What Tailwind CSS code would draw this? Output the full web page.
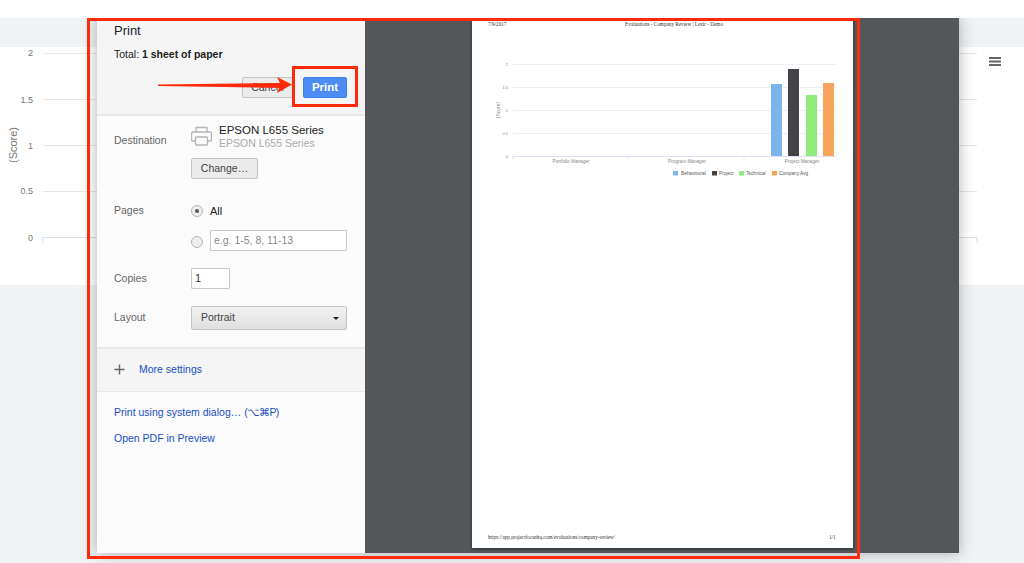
<!DOCTYPE html>
<html lang="en">
<head>
<meta charset="utf-8">
<title>Print</title>
<script src="https://cdn.jsdelivr.net/npm/@tailwindcss/browser@4"></script>
</head>
<body class="overflow-hidden">
<div class="relative w-[1024px] h-[563px] overflow-hidden bg-[#f0f3f6] font-['Liberation_Sans',Arial,sans-serif]">
  <div class="h-[18px] bg-white relative z-20"></div>
  <div class="mt-[29px] h-[238px] bg-white">
    <svg width="1024" height="238" viewBox="0 0 1024 238" font-family="Liberation Sans, Arial, sans-serif" fill="#777" font-size="9">
      <g stroke="#e6e6e6"><path d="M43 6.500H977M43 52.500H977M43 98.500H977M43 144.500H977"/></g>
      <path d="M43 196V190.500H977V196" fill="none" stroke="#d5dfe9"/>
      <text x="33" y="9" text-anchor="end">2</text>
      <text x="33" y="56" text-anchor="end">1.5</text>
      <text x="33" y="102" text-anchor="end">1</text>
      <text x="33" y="147" text-anchor="end">0.5</text>
      <text x="33" y="194" text-anchor="end">0</text>
      <text transform="translate(17 98) rotate(-90)" text-anchor="middle" font-size="11">(Score)</text>
      <path d="M989 11H1001M989 14.500H1001M989 18H1001" stroke="#666" stroke-width="2"/>
    </svg>
  </div>

  <div class="absolute left-[97px] top-[18px] z-10 flex h-[535px] w-[862px] shadow-[0_0_14px_rgba(0,0,0,0.3)]">
    <aside class="flex h-full w-[268px] flex-col bg-[#fbfbfb] text-[#333]">
      <header class="h-[98px] border-b-2 border-[#e8e8e8] bg-[#f5f5f5] pl-[17px] pr-[18px] pt-[5px]">
        <h1 class="text-[13px] leading-[15px] text-[#222]">Print</h1>
        <p class="mt-[10px] text-[10.500px] leading-[13px] text-[#222]">Total: <b>1 sheet of paper</b></p>
        <div class="mt-[16px] flex justify-end gap-[10px]">
          <button class="h-[21px] w-[51px] rounded-[2px] border border-[#c4c4c4] bg-[#ececec] text-[10.500px] text-[#444]">Cancel</button>
          <button class="h-[21px] w-[44px] rounded-[2px] border border-[#3f7fe8] bg-[#4d8cf5] text-[11.500px] font-bold text-white">Print</button>
        </div>
      </header>

      <section class="h-[231px] px-[17px] pt-[7px] text-[10.500px]">
        <div class="flex">
          <span class="mt-[10px] w-[77px] text-[#666]">Destination</span>
          <div>
            <div class="flex items-start gap-[7px]">
              <svg width="21" height="22" viewBox="0 0 21 22" class="mt-[3px]" fill="none" stroke="#b5b5b5" stroke-width="1.300">
                <path d="M5 6V1.500H16V6M4.500 15H1.500a1 1 0 0 1-1-1V7.500a1.500 1.500 0 0 1 1.500-1.500H19a1.500 1.500 0 0 1 1.500 1.500V14a1 1 0 0 1-1 1H16.500"/>
                <rect x="4.500" y="11" width="12" height="8" rx="1"/>
              </svg>
              <div>
                <div class="text-[11.500px] leading-[14px] text-[#222]">EPSON L655 Series</div>
                <div class="text-[10.500px] leading-[13px] text-[#aaa]">EPSON L655 Series</div>
              </div>
            </div>
            <button class="mt-[8px] h-[21px] w-[67px] rounded-[2px] border border-[#c4c4c4] bg-[#ececec] text-[10.500px] text-[#444]">Change…</button>
          </div>
        </div>

        <div class="mt-[25px] flex">
          <span class="-mt-[1px] w-[77px] text-[#666]">Pages</span>
          <div>
            <label class="flex h-[14px] items-center gap-[7px] text-[11px] text-[#222]">
              <span class="flex h-[12px] w-[12px] items-center justify-center rounded-full border border-[#b5b5b5] bg-[#eee]"><span class="h-[4px] w-[4px] rounded-full bg-[#555]"></span></span>
              All
            </label>
            <div class="mt-[12px] flex items-center gap-[7px]">
              <span class="mt-[2px] h-[12px] w-[12px] rounded-full border border-[#b5b5b5] bg-[#eee]"></span>
              <div class="flex h-[21px] w-[137px] items-center rounded-[1px] border border-[#c8c8c8] bg-white pl-[3px] text-[#888]">e.g. 1-5, 8, 11-13</div>
            </div>
          </div>
        </div>

        <div class="mt-[17px] flex items-center">
          <span class="w-[77px] text-[#666]">Copies</span>
          <div class="flex h-[21px] w-[39px] items-center rounded-[1px] border border-[#c8c8c8] bg-white pl-[3px] text-[11px] text-[#333]">1</div>
        </div>

        <div class="mt-[17px] flex items-center">
          <span class="w-[77px] text-[#666]">Layout</span>
          <div class="flex h-[24px] w-[156px] items-center justify-between rounded-[2px] border border-[#c4c4c4] bg-gradient-to-b from-[#f2f2f2] to-[#dfdfdf] pl-[9px] pr-[7px] text-[#444]">
            Portrait
            <span class="h-0 w-0 border-x-[3px] border-t-[3px] border-x-transparent border-t-[#222]"></span>
          </div>
        </div>
      </section>

      <div class="flex h-[45px] items-center border-y border-t-2 border-y-[#e8e8e8] bg-[#f5f5f5] pb-[1px] pl-[17px] text-[10.500px] text-[#1a4fc4]">
        <svg width="11" height="11" viewBox="0 0 11 11" stroke="#666" stroke-width="1.400"><path d="M5.500 0.500V10.500M0.500 5.500H10.500"/></svg>
        <span class="ml-[14px]">More settings</span>
      </div>

      <nav class="flex flex-col gap-[13px] pl-[17px] pt-[14px] text-[10.500px] leading-[13px] text-[#1a4fc4]">
        <a>Print using system dialog… <span class="tracking-[-0.7px]">(⌥⌘P)</span></a>
        <a>Open PDF in Preview</a>
      </nav>
    </aside>

    <main class="h-full flex-1 bg-[#53575a] pl-[107px]">
      <div class="relative h-[530px] w-[381px] bg-white font-['Liberation_Serif','Times_New_Roman',serif] shadow-[0_1px_3px_rgba(0,0,0,0.5)]">
        <svg width="381" height="530" viewBox="0 0 381 530" font-family="Liberation Serif, serif">
          <g font-size="5.200" fill="#333">
            <text x="16" y="7.500">7/9/2017</text>
            <text x="153" y="7.500">Evaluations - Company Review | Lexir - Demo</text>
            <text x="16" y="521">https://app.projectfocushq.com/evaluations/company-review/</text>
            <text x="357" y="521">1/1</text>
          </g>
          <g stroke="#eceff3"><path d="M41 46.500H364M41 69.500H364M41 92.500H364M41 115.500H364"/></g>
          <path d="M41 138.500H364M41 138V141M156 138V141M272 138V141" fill="none" stroke="#d9e2ee"/>
          <g font-family="Liberation Sans, sans-serif" font-size="4" fill="#888">
            <text x="36" y="48" text-anchor="end">2</text>
            <text x="36" y="71" text-anchor="end">1.5</text>
            <text x="36" y="94" text-anchor="end">1</text>
            <text x="36" y="117" text-anchor="end">0.5</text>
            <text x="36" y="140" text-anchor="end">0</text>
            <text transform="translate(28 92) rotate(-90)" text-anchor="middle" font-size="5">(Score)</text>
            <text x="99" y="145" text-anchor="middle" font-size="4.700">Portfolio Manager</text>
            <text x="215" y="145" text-anchor="middle" font-size="4.700">Program Manager</text>
            <text x="330" y="145" text-anchor="middle" font-size="4.700">Project Manager</text>
            <g fill="#555" font-size="4.700">
              <text x="209" y="157">Behavioural</text>
              <text x="247" y="157">Project</text>
              <text x="274" y="157">Technical</text>
              <text x="307" y="157">Company Avg</text>
            </g>
          </g>
          <rect x="299" y="66" width="11" height="72" fill="#7cb5ec"/>
          <rect x="316" y="51" width="11" height="87" fill="#434348"/>
          <rect x="334" y="77" width="11" height="61" fill="#90ed7d"/>
          <rect x="351" y="65" width="11" height="73" fill="#f7a35c"/>
          <rect x="201" y="153" width="5" height="4.500" fill="#7cb5ec"/>
          <rect x="240" y="153" width="5" height="4.500" fill="#434348"/>
          <rect x="267" y="153" width="5" height="4.500" fill="#90ed7d"/>
          <rect x="300" y="153" width="5" height="4.500" fill="#f7a35c"/>
        </svg>
      </div>
    </main>
  </div>

  <div class="absolute left-[87px] top-[18px] z-30 h-[541px] w-[773px] border-[3px] border-[#ff2a0a]"></div>
  <div class="absolute left-[292px] top-[66px] z-30 h-[41px] w-[66px] border-[3px] border-[#ff2a0a]"></div>
  <svg class="absolute left-[155px] top-[74px] z-30" width="140" height="22" viewBox="0 0 140 22">
    <path d="M3 10.500L125 9L122 3L137 10.500L122 19L124 14L3 12Z" fill="#ff2a0a"/>
  </svg>
</div>
</body>
</html>
